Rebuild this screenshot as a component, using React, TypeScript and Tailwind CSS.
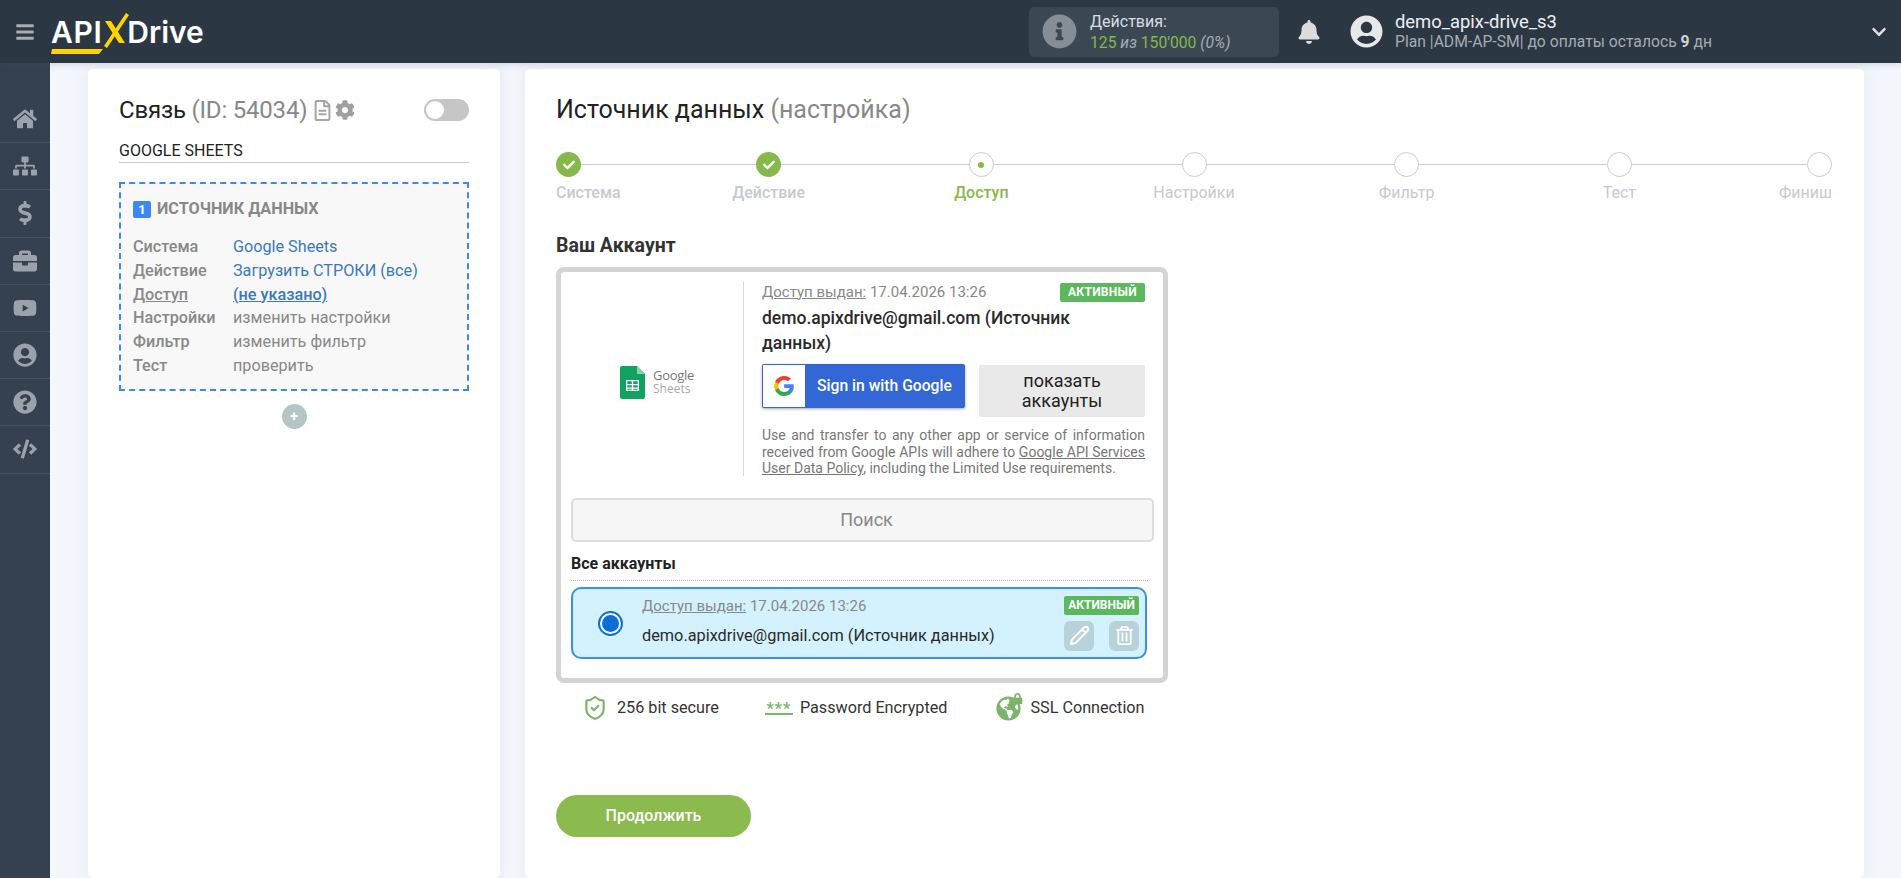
import {
  FaBars,
  FaBell,
  FaBriefcase,
  FaChevronDown,
  FaCheck,
  FaCode,
  FaCog,
  FaDollarSign,
  FaGlobeAmericas,
  FaHome,
  FaInfoCircle,
  FaLock,
  FaQuestionCircle,
  FaRegFileAlt,
  FaRegTrashAlt,
  FaSitemap,
  FaUserCircle,
  FaYoutube,
} from 'react-icons/fa';
import { Pencil, ShieldCheck } from 'lucide-react';

const menu = [FaHome, FaSitemap, FaDollarSign, FaBriefcase, FaYoutube, FaUserCircle, FaQuestionCircle, FaCode];

const rows = [
  { label: 'Система', value: 'Google Sheets', cls: 'text-[#3a7ab8]' },
  { label: 'Действие', value: 'Загрузить СТРОКИ (все)', cls: 'text-[#3a7ab8]' },
  { label: 'Доступ', value: '(не указано)', cls: 'text-[#3a7ab8] font-medium underline', labelCls: 'underline' },
  { label: 'Настройки', value: 'изменить настройки', cls: 'text-[#888]' },
  { label: 'Фильтр', value: 'изменить фильтр', cls: 'text-[#888]' },
  { label: 'Тест', value: 'проверить', cls: 'text-[#888]' },
];

const steps = [
  { name: 'Система', state: 'done', box: 'flex-[1] items-start' },
  { name: 'Действие', state: 'done', box: 'flex-[2] items-center' },
  { name: 'Доступ', state: 'current', box: 'flex-[2] items-center' },
  { name: 'Настройки', state: 'todo', box: 'flex-[2] items-center' },
  { name: 'Фильтр', state: 'todo', box: 'flex-[2] items-center' },
  { name: 'Тест', state: 'todo', box: 'flex-[2] items-center' },
  { name: 'Финиш', state: 'todo', box: 'flex-[1] items-end' },
];

function Logo() {
  return (
    <div className="flex items-center ml-[16px] font-['Inter',sans-serif] font-semibold text-white text-[30px] leading-none">
      <div className="relative tracking-[0.6px]">
        <span>API</span>
        <svg className="absolute left-0 top-[32px]" width="52" height="6" viewBox="0 0 52 6">
          <path d="M1 0 H52 L48 5 H0 Z" fill="#ffd500" />
        </svg>
      </div>
      <svg className="-mt-[2px] -mr-[2px]" width="27" height="36" viewBox="0 0 27 36">
        <path d="M24 0 L27 2 L5 35 L2 33 Z" fill="#ffd500" />
        <path d="M3 8 H9 L23 30 H17 Z" fill="#ffd500" />
      </svg>
      <span>Drive</span>
    </div>
  );
}

function Header() {
  return (
    <header className="h-[63px] shrink-0 bg-[#2c3744] flex items-center relative z-10 shadow-[0_2px_6px_rgba(60,80,110,0.18)]">
      <div className="w-[1029px] shrink-0 flex items-center">
        <FaBars className="ml-[15px] text-[#a5acb3] text-[20px]" />
        <Logo />
      </div>
      <div className="w-[250px] h-[50px] rounded-[5px] bg-[#3b4854] flex items-center">
        <FaInfoCircle className="ml-[13px] text-[35px] text-[#858e96]" />
        <div className="ml-[13px] leading-[21px]">
          <div className="text-[16px] text-[#d8dde2]">Действия:</div>
          <div className="text-[15.7px] text-[#85b84a]">
            125 <i className="text-[#a5acb3]">из</i> 150'000 <i className="text-[#a5acb3]">(0%)</i>
          </div>
        </div>
      </div>
      <FaBell className="ml-[18px] text-[24px] text-[#dcdcdc]" />
      <FaUserCircle className="ml-[29px] text-[33px] text-[#e8e8e8]" />
      <div className="ml-[12px] leading-[20px]">
        <div className="text-[18.4px] text-[#eceff2]">demo_apix-drive_s3</div>
        <div className="text-[15.7px] text-[#a5acb3]">
          Plan |ADM-AP-SM| до оплаты осталось <b className="text-[#d0d4d8] font-bold">9</b> дн
        </div>
      </div>
      <FaChevronDown className="ml-auto mr-[14px] text-[16px] text-[#dfe2e5]" />
    </header>
  );
}

function Sidebar() {
  return (
    <aside className="w-[50px] shrink-0 bg-[#36414f] pt-[33px]">
      {menu.map((Icon, i) => (
        <div key={i} className="h-[47.2px] flex items-center justify-center border-b border-[#465160] text-[#9aa2ab]">
          <Icon className="text-[24px]" />
        </div>
      ))}
    </aside>
  );
}

function LeftCard() {
  return (
    <section className="w-[412px] shrink-0 h-full bg-white rounded-[5px] px-[31px] pt-[24px] shadow-[0_0_14px_rgba(120,140,170,0.12)]">
      <div className="flex items-center h-[34px]">
        <h2 className="text-[24px] tracking-[-0.2px] font-normal text-[#222]">
          Связь <span className="text-[#888]">(ID: 54034)</span>
        </h2>
        <FaRegFileAlt className="ml-[5px] text-[21px] text-[#a5a5a5]" />
        <FaCog className="ml-[2px] text-[20px] text-[#a0a0a0]" />
        <div className="ml-auto w-[45px] h-[22px] rounded-full bg-[#c6c6c6] flex items-center pl-[2px]">
          <div className="w-[18px] h-[18px] rounded-full bg-white" />
        </div>
      </div>
      <div className="mt-[5px] h-[31px] pt-[8px] text-[16px] leading-[22px] text-[#222] border-b border-[#ccc]">GOOGLE SHEETS</div>
      <div className="mt-[19px] h-[209px] border-2 border-dashed border-[#3b88f5] bg-[#f8f8f8] pl-[12px] pt-[15px]">
        <div className="flex items-center h-[20px]">
          <span className="w-[18px] h-[17px] rounded-[2px] bg-[#3b88f5] text-white text-[13px] font-bold leading-[17px] text-center">1</span>
          <span className="ml-[6px] text-[16.2px] font-bold text-[#888]">ИСТОЧНИК ДАННЫХ</span>
        </div>
        <div className="mt-[16px]">
          {rows.map((r) => (
            <div key={r.label} className="flex h-[23.8px] leading-[24px] text-[16.2px]">
              <span className={`w-[100px] font-medium text-[#888] ${r.labelCls ?? ''}`}>{r.label}</span>
              <span className={r.cls}>{r.value}</span>
            </div>
          ))}
        </div>
      </div>
      <div className="mt-[13px] mx-auto w-[25px] h-[25px] rounded-full bg-[#b3c5c5] text-white text-[15px] leading-[24px] text-center font-bold">+</div>
    </section>
  );
}

function Stepper() {
  return (
    <div className="relative flex mt-[25px]">
      <div className="absolute left-[12px] right-[12px] top-[12px] h-px bg-[#ccc]" />
      {steps.map((s) => (
        <div key={s.name} className={`relative flex flex-col ${s.box}`}>
          {s.state === 'done' && (
            <div className="w-[25px] h-[25px] rounded-full bg-[#86b84b] flex items-center justify-center">
              <FaCheck className="text-white text-[12px]" />
            </div>
          )}
          {s.state === 'current' && (
            <div className="w-[25px] h-[25px] rounded-full bg-white border border-[#ccc] flex items-center justify-center">
              <div className="w-[6px] h-[6px] rounded-full bg-[#86b84b]" />
            </div>
          )}
          {s.state === 'todo' && <div className="w-[25px] h-[25px] rounded-full bg-white border border-[#ccc]" />}
          <span className={`mt-[5px] text-[16px] leading-[22px] ${s.state === 'current' ? 'text-[#86b84b] font-medium' : s.state === 'done' ? 'text-[#c5c9d2] font-medium' : 'text-[#c5c9d2]'}`}>
            {s.name}
          </span>
        </div>
      ))}
    </div>
  );
}

function SheetsLogo() {
  return (
    <div className="w-[172px] shrink-0 flex items-center justify-center">
      <div className="flex items-center">
        <svg width="25" height="33" viewBox="0 0 25 33">
          <path d="M2 0 H17 L25 8 V31 a2 2 0 0 1 -2 2 H2 a2 2 0 0 1 -2 -2 V2 a2 2 0 0 1 2 -2 Z" fill="#0fa35f" />
          <path d="M17 0 L25 8 H17 Z" fill="#86d3ae" />
          <path d="M6 14 H19 V25 H6 Z M7.3 15.3 V18 H11.8 V15.3 Z M13.2 15.3 V18 H17.7 V15.3 Z M7.3 19.2 V21.5 H11.8 V19.2 Z M13.2 19.2 V21.5 H17.7 V19.2 Z M7.3 22.7 V23.8 H11.8 V22.7 Z M13.2 22.7 V23.8 H17.7 V22.7 Z" fill="#ffffff" fillRule="evenodd" />
        </svg>
        <div className="ml-[8px] font-['Open_Sans',sans-serif] leading-[14px]">
          <div className="text-[13px] text-[#777] tracking-[-0.3px]">Google</div>
          <div className="text-[12px] text-[#aaa]">Sheets</div>
        </div>
      </div>
    </div>
  );
}

function GoogleG() {
  return (
    <svg width="20" height="20" viewBox="0 0 533.5 544.3">
      <path fill="#4285F4" d="M533.5 278.4c0-18.5-1.5-37.1-4.7-55.3H272.1v104.8h147c-6.1 33.8-25.7 63.7-54.4 82.7v68h87.7c51.5-47.4 81.1-117.4 81.1-200.2z" />
      <path fill="#34A853" d="M272.1 544.3c73.4 0 135.3-24.1 180.4-65.7l-87.7-68c-24.4 16.6-55.9 26-92.6 26-71 0-131.2-47.9-152.8-112.3H28.9v70.1c46.2 91.9 140.3 149.9 243.2 149.9z" />
      <path fill="#FBBC04" d="M119.3 324.3c-11.4-33.8-11.4-70.4 0-104.2V150H28.9c-38.6 76.9-38.6 167.5 0 244.4l90.4-70.1z" />
      <path fill="#EA4335" d="M272.1 107.7c38.8-.6 76.3 14 104.4 40.8l77.7-77.7C405 24.6 339.7-.8 272.1 0 169.2 0 75.1 58 28.9 150l90.4 70.1c21.5-64.5 81.8-112.4 152.8-112.4z" />
    </svg>
  );
}

function AccountBox() {
  return (
    <div className="mt-[9px] w-[612px] h-[416px] border-[5px] border-[#d4d4d4] rounded-[8px] bg-white px-[10px] pt-[10px]">
      <div className="flex h-[200px]">
        <SheetsLogo />
        <div className="w-px bg-[#d8d8d8] h-[194px]" />
        <div className="ml-[18px] w-[383px]">
          <div className="flex justify-between items-center h-[20px] text-[15px] text-[#888]">
            <span>
              <span className="underline">Доступ выдан:</span> 17.04.2026 13:26
            </span>
            <span className="h-[19px] rounded-[2px] bg-[#5cb85c] text-white text-[12px] font-bold leading-[19px] px-[8px] tracking-[0.3px]">АКТИВНЫЙ</span>
          </div>
          <div className="mt-[4px] text-[17.5px] leading-[25px] font-medium text-[#2a2a2a]">
            demo.apixdrive@gmail.com (Источник
            <br />
            данных)
          </div>
          <div className="mt-[8px] flex justify-between items-start">
            <div className="w-[203px] h-[44px] rounded-[2px] bg-[#3367d6] flex items-center shadow-[0_1px_3px_rgba(0,0,0,0.35)] p-px">
              <div className="w-[42px] h-[42px] bg-white flex items-center justify-center rounded-l-[1px]">
                <GoogleG />
              </div>
              <span className="ml-[12px] text-white text-[15.7px] font-medium whitespace-nowrap">Sign in with Google</span>
            </div>
            <div className="mt-[1px] w-[166px] h-[52px] rounded-[2px] bg-[#e9e9e9] text-[18px] leading-[20px] text-[#222] text-center pt-[6px]">
              показать
              <br />
              аккаунты
            </div>
          </div>
          <p className="mt-[10px] text-[14px] leading-[16.5px] text-[#777] text-justify">
            Use and transfer to any other app or service of information received from Google APIs will adhere to{' '}
            <span className="underline">Google API Services User Data Policy</span>, including the Limited Use requirements.
          </p>
        </div>
      </div>
      <div className="mt-[16px] h-[44px] rounded-[5px] border-2 border-[#ddd] bg-[#f6f6f6] text-[18px] leading-[40px] text-center text-[#888] pl-[8px] -mr-[1px]">Поиск</div>
      <div className="mt-[11px] h-[28px] pb-[5px] text-[16px] leading-[22px] font-bold text-[#222] border-b border-dotted border-[#bbb] mr-[5px]">Все аккаунты</div>
      <div className="mt-[6px] h-[72px] mr-[6px] rounded-[10px] border-2 border-[#3b8bf5] bg-[#d4f2fd] flex items-center">
        <div className="ml-[25px] w-[25px] h-[25px] rounded-full bg-white border-2 border-[#0a6fd8] flex items-center justify-center">
          <div className="w-[17px] h-[17px] rounded-full bg-[#0a6fd8]" />
        </div>
        <div className="ml-[19px] -mt-[4px]">
          <div className="text-[15px] leading-[20px] text-[#888]">
            <span className="underline">Доступ выдан:</span> 17.04.2026 13:26
          </div>
          <div className="mt-[10px] text-[16.3px] leading-[20px] text-[#2a2a2a]">demo.apixdrive@gmail.com (Источник данных)</div>
        </div>
        <div className="ml-auto mr-[6px] w-[75px] flex flex-col items-stretch">
          <span className="h-[19px] rounded-[2px] bg-[#5cb85c] text-white text-[12px] font-bold leading-[19px] text-center">АКТИВНЫЙ</span>
          <div className="mt-[6px] flex justify-between">
            <div className="w-[30px] h-[30px] rounded-[6px] bg-[#b8d2dc] flex items-center justify-center text-white">
              <Pencil size={21} strokeWidth={2.2} />
            </div>
            <div className="w-[30px] h-[30px] rounded-[6px] bg-[#b8d2dc] flex items-center justify-center">
              <FaRegTrashAlt className="text-white text-[19px]" />
            </div>
          </div>
        </div>
      </div>
    </div>
  );
}

function Trust() {
  return (
    <div className="mt-[8px] w-[612px] flex items-center h-[34px] text-[16.2px] text-[#333]">
      <ShieldCheck className="ml-[26px] text-[#7cb569]" size={26} strokeWidth={2} />
      <span className="ml-[9px]">256 bit secure</span>
      <div className="ml-[46px] w-[28px] flex flex-col items-center border-b-2 border-[#7cb569] h-[14px] text-[#7cb569] text-[16px] leading-[16px] font-bold tracking-[1px]">***</div>
      <span className="ml-[7px]">Password Encrypted</span>
      <div className="relative ml-[49px] w-[27px] h-[25px]">
        <FaGlobeAmericas className="text-[#7cb569] text-[25px]" />
        <FaLock className="absolute right-0 -top-[3px] text-[#7cb569] text-[11px]" />
      </div>
      <span className="ml-[7px]">SSL Connection</span>
    </div>
  );
}

function RightCard() {
  return (
    <section className="w-[1339px] shrink-0 h-full bg-white rounded-[5px] pl-[31px] pr-[32px] pt-[24px] shadow-[0_0_14px_rgba(120,140,170,0.12)]">
      <h1 className="text-[25px] leading-[34px] font-normal text-[#222]">
        Источник данных <span className="text-[#888]">(настройка)</span>
      </h1>
      <Stepper />
      <h3 className="mt-[30px] text-[19.5px] leading-[24px] font-bold text-[#333]">Ваш Аккаунт</h3>
      <AccountBox />
      <Trust />
      <button className="mt-[70px] w-[195px] h-[42px] rounded-full bg-[#8bbb4f] text-white text-[16px] font-medium">Продолжить</button>
    </section>
  );
}

export default function App() {
  return (
    <div className="h-screen overflow-hidden flex flex-col bg-[#f3f6fb] font-['Roboto','Noto_Sans',sans-serif]">
      <Header />
      <div className="flex flex-1 min-h-0">
        <Sidebar />
        <main className="flex-1 min-w-0 flex gap-[25px] pl-[38px] pt-[6px]">
          <LeftCard />
          <RightCard />
        </main>
      </div>
    </div>
  );
}
